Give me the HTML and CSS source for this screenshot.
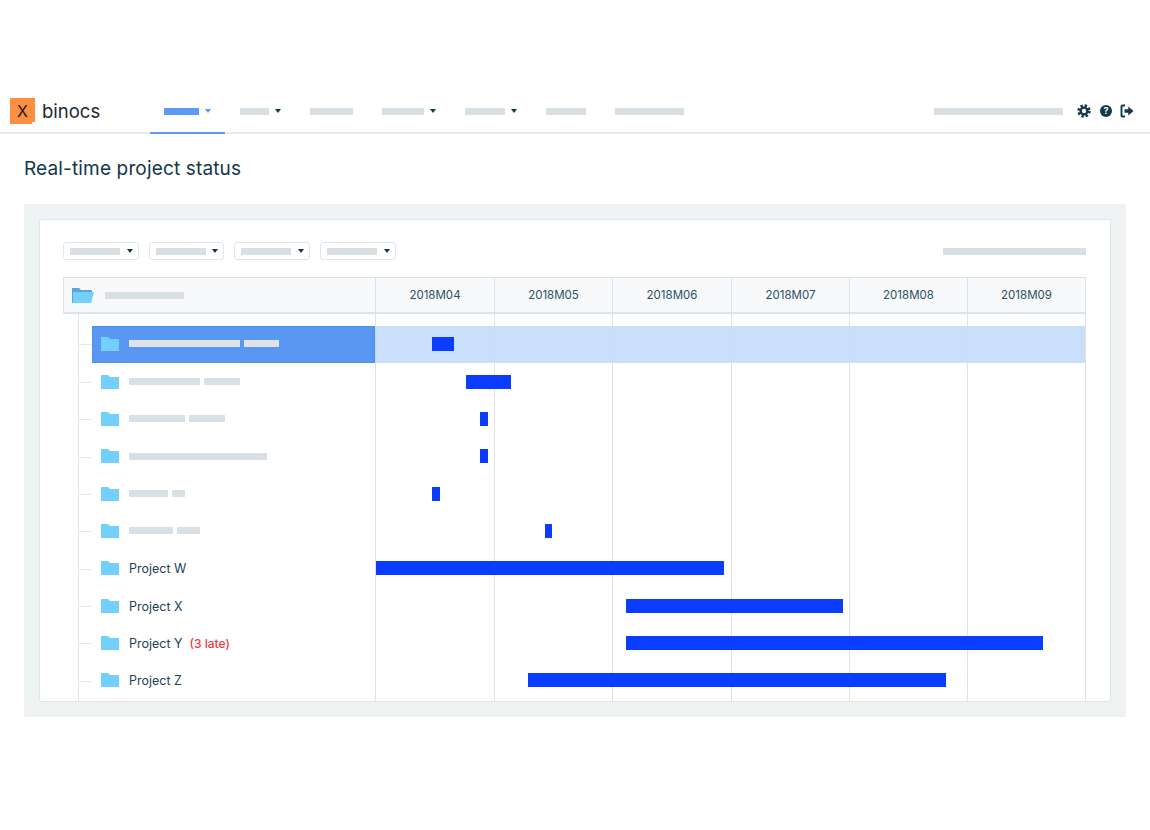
FILE: index.html
```html
<!DOCTYPE html>
<html lang="en">
<head>
    <meta charset="UTF-8">
    <meta name="viewport" content="width=device-width, initial-scale=1.0">
    <title>Real-time project status</title>
    <link rel="stylesheet" href="styles.css">
</head>
<body>
    <svg class="defs" width="0" height="0">
        <symbol id="folder" viewBox="0 0 18 14">
            <path d="M0 0h7l2 2h9v12H0z" fill="#73d0fd"/>
        </symbol>
    </svg>

    <header class="topbar">
        <div class="logo">
            <span class="logo-mark">X</span>
            <span class="logo-name">binocs</span>
        </div>
        <nav class="nav">
            <div class="nav-item active"><span class="stub" style="width:35px"></span><span class="caret"></span></div>
            <div class="nav-item"><span class="stub" style="width:29px"></span><span class="caret"></span></div>
            <div class="nav-item"><span class="stub" style="width:43px"></span></div>
            <div class="nav-item"><span class="stub" style="width:42px"></span><span class="caret"></span></div>
            <div class="nav-item"><span class="stub" style="width:40px"></span><span class="caret"></span></div>
            <div class="nav-item"><span class="stub" style="width:40px"></span></div>
            <div class="nav-item"><span class="stub" style="width:69px"></span></div>
        </nav>
        <div class="tools">
            <span class="stub" style="width:129px"></span>
            <svg class="icon" viewBox="0 0 14 14">
                <circle cx="7" cy="7" r="3.4" fill="none" stroke="#12384a" stroke-width="2.4"/>
                <circle cx="7" cy="7" r="5.4" fill="none" stroke="#12384a" stroke-width="2.6" stroke-dasharray="2.4 1.84"/>
            </svg>
            <svg class="icon" viewBox="0 0 14 14">
                <circle cx="7" cy="7" r="6" fill="#12384a"/>
                <text x="7" y="10.2" text-anchor="middle" class="icon-q">?</text>
            </svg>
            <svg class="icon" viewBox="0 0 14 14">
                <path d="M5 1.500H2.500a1 1 0 0 0-1 1v9a1 1 0 0 0 1 1H5" fill="none" stroke="#12384a" stroke-width="1.9"/>
                <path d="M4.500 5.300h3.800V2.500L13.500 7 8.300 11.500V8.700H4.500z" fill="#12384a"/>
            </svg>
        </div>
    </header>

    <h1 class="page-title">Real-time project status</h1>

    <section class="panel">
        <div class="card">
            <div class="filters">
                <div class="select"><span class="stub"></span><span class="caret"></span></div>
                <div class="select"><span class="stub"></span><span class="caret"></span></div>
                <div class="select"><span class="stub"></span><span class="caret"></span></div>
                <div class="select"><span class="stub"></span><span class="caret"></span></div>
                <span class="stub filters-right"></span>
            </div>

            <div class="gantt">
                <div class="gantt-head">
                    <div class="head-name">
                        <svg class="folder-open" viewBox="0 0 22 15">
                            <path d="M0 0h7l2 2h11v3H0z" fill="#5ba6d6"/>
                            <path d="M0 15V4h22l-3 11z" fill="#73d0fd"/>
                            <path d="M0 0h1v15H0z" fill="#5ba6d6"/>
                        </svg>
                        <span class="stub" style="width:79px"></span>
                    </div>
                    <div class="months">
                        <div>2018M04</div>
                        <div>2018M05</div>
                        <div>2018M06</div>
                        <div>2018M07</div>
                        <div>2018M08</div>
                        <div>2018M09</div>
                    </div>
                </div>

                <div class="gantt-body">
                    <div class="tree">
                        <div class="tree-row selected"><svg class="folder"><use href="#folder"/></svg><span class="stub" style="width:111px"></span><span class="stub" style="width:35px"></span></div>
                        <div class="tree-row"><svg class="folder"><use href="#folder"/></svg><span class="stub" style="width:71px"></span><span class="stub" style="width:36px"></span></div>
                        <div class="tree-row"><svg class="folder"><use href="#folder"/></svg><span class="stub" style="width:56px"></span><span class="stub" style="width:36px"></span></div>
                        <div class="tree-row"><svg class="folder"><use href="#folder"/></svg><span class="stub" style="width:138px"></span></div>
                        <div class="tree-row"><svg class="folder"><use href="#folder"/></svg><span class="stub" style="width:39px"></span><span class="stub" style="width:13px"></span></div>
                        <div class="tree-row"><svg class="folder"><use href="#folder"/></svg><span class="stub" style="width:44px"></span><span class="stub" style="width:23px"></span></div>
                        <div class="tree-row"><svg class="folder"><use href="#folder"/></svg><span class="name">Project W</span></div>
                        <div class="tree-row"><svg class="folder"><use href="#folder"/></svg><span class="name">Project X</span></div>
                        <div class="tree-row"><svg class="folder"><use href="#folder"/></svg><span class="name">Project Y</span><span class="late">(3 late)</span></div>
                        <div class="tree-row"><svg class="folder"><use href="#folder"/></svg><span class="name">Project Z</span></div>
                    </div>

                    <div class="timeline">
                        <div class="grid-lines"><i></i><i></i><i></i><i></i><i></i><i></i></div>
                        <div class="bar-row selected"><span class="bar" style="margin-left:57px;width:22px"></span></div>
                        <div class="bar-row"><span class="bar" style="margin-left:91px;width:45px"></span></div>
                        <div class="bar-row"><span class="bar" style="margin-left:105px;width:8px"></span></div>
                        <div class="bar-row"><span class="bar" style="margin-left:105px;width:8px"></span></div>
                        <div class="bar-row"><span class="bar" style="margin-left:57px;width:8px"></span></div>
                        <div class="bar-row"><span class="bar" style="margin-left:170px;width:7px"></span></div>
                        <div class="bar-row"><span class="bar" style="margin-left:1px;width:348px"></span></div>
                        <div class="bar-row"><span class="bar" style="margin-left:251px;width:217px"></span></div>
                        <div class="bar-row"><span class="bar" style="margin-left:251px;width:417px"></span></div>
                        <div class="bar-row"><span class="bar" style="margin-left:153px;width:418px"></span></div>
                    </div>
                </div>
            </div>
        </div>
    </section>
</body>
</html>
```

FILE: styles.css
```css
/* page */
body {
    margin: 0;
    padding-top: 90px;
    background-color: #fff;
    color: #12384a;
    font-family: "Inter", "Liberation Sans", sans-serif;
}

.defs {
    position: absolute;
}

.stub {
    display: block;
    height: 7px;
    background-color: #d9e0e4;
}

.caret {
    width: 0;
    height: 0;
    border-left: 3px solid transparent;
    border-right: 3px solid transparent;
    border-top: 4px solid #12384a;
}

/* top bar */
.topbar {
    display: flex;
    align-items: stretch;
    height: 42px;
    padding-left: 10px;
    border-bottom: 2px solid #e6ebf0;
}

.logo {
    display: flex;
    align-items: center;
    width: 140px;
}

.logo-mark {
    width: 25px;
    height: 26px;
    margin-right: 7px;
    background-color: #fd8f40;
    clip-path: polygon(0 0, 100% 0, 100% 92%, 88% 92%, 88% 100%, 0 100%);
    color: #1a1a1a;
    font-size: 16px;
    line-height: 26px;
    text-align: center;
}

.logo-name {
    color: #1c2a33;
    font-size: 18.5px;
}

.nav {
    display: flex;
    flex: 1;
}

.nav-item {
    display: flex;
    align-items: center;
    gap: 6px;
    padding: 0 14px;
    margin-right: 1px;
}

.nav-item.active {
    margin-bottom: -2px;
    border-bottom: 2px solid #5b9bf4;
}

.nav-item.active .stub {
    background-color: #5b9bf4;
}

.nav-item.active .caret {
    border-top-color: #5b9bf4;
}

.tools {
    display: flex;
    align-items: center;
    gap: 7.5px;
    padding-right: 16px;
}

.tools .stub {
    margin-right: 6.5px;
}

.icon {
    width: 14px;
    height: 14px;
}

.icon-q {
    fill: #fff;
    font-size: 9px;
    font-weight: 700;
}

.page-title {
    margin: 23px 0 23px 24px;
    font-size: 19px;
    font-weight: 400;
    letter-spacing: 0.15px;
    line-height: 24px;
}

/* panel */
.panel {
    margin: 0 24px;
    padding: 15px;
    background-color: #eff2f3;
}

.card {
    padding: 22px 24px 0 23px;
    background-color: #fff;
    border: 1px solid #dfe5e8;
    border-radius: 2px;
}

.filters {
    display: flex;
    align-items: center;
    gap: 10px;
    margin-bottom: 17px;
}

.select {
    display: flex;
    align-items: center;
    justify-content: space-between;
    box-sizing: border-box;
    width: 75.7px;
    height: 18px;
    padding: 0 5px 0 6px;
    border: 1px solid #e2e7ea;
    border-radius: 3px;
}

.select .stub {
    width: 50px;
}

.filters-right {
    width: 143px;
    margin-left: auto;
}

/* gantt */
.gantt-head {
    display: flex;
    height: 34px;
    border: 1px solid #dde3e7;
    border-bottom-width: 2px;
    background-color: #f8f9fa;
}

.head-name {
    display: flex;
    align-items: center;
    gap: 11px;
    width: 311px;
    padding-left: 8px;
    box-sizing: border-box;
}

.folder-open {
    width: 22px;
    height: 15px;
}

.months,
.grid-lines {
    display: grid;
    grid-template-columns: 119px 118px 119px 118px 118px 1fr;
}

.months {
    flex: 1;
}

.months div {
    border-left: 1px solid #dde3e7;
    color: #2a5063;
    font-size: 11.5px;
    line-height: 35px;
    text-align: center;
}

.gantt-body {
    display: flex;
    margin-left: 1px;
    border-right: 1px solid #dde3e7;
}

.tree {
    width: 311px;
    padding: 12px 0 2px;
    box-sizing: border-box;
    background: linear-gradient(#dde3e7, #dde3e7) 14px 0 / 1px 100% no-repeat;
}

.tree-row {
    position: relative;
    display: flex;
    align-items: center;
    gap: 4px;
    box-sizing: border-box;
    height: 37.35px;
    margin-left: 28px;
    padding-left: 9px;
}

/* branch off the tree line */
.tree-row::before {
    content: "";
    position: absolute;
    left: -13px;
    top: 50%;
    width: 13px;
    height: 1px;
    background-color: #e4e9ec;
}

.tree-row .stub {
    margin-bottom: 1px;
}

.tree-row.selected,
.bar-row.selected {
    height: 36.5px;
    margin-bottom: 0.85px;
}

.tree-row.selected {
    background-color: #5898f3;
    outline: 1px solid #4a8ff5;
    outline-offset: -1px;
}

.tree-row.selected .stub {
    background-color: #e0e2e4;
}

.folder {
    width: 18px;
    height: 14px;
    margin: 0 6px 1px 0;
    flex: none;
}

.name {
    color: #1d4456;
    font-size: 12.5px;
}

.late {
    margin-left: 3px;
    color: #f8373c;
    font-size: 12px;
    font-weight: 500;
}

.timeline {
    position: relative;
    flex: 1;
    padding-top: 12px;
}

.grid-lines {
    position: absolute;
    inset: 0;
}

.grid-lines i {
    border-left: 1px solid #dde3e7;
}

.bar-row {
    position: relative;
    display: flex;
    align-items: center;
    box-sizing: border-box;
    height: 37.35px;
    padding-bottom: 1px;
}

.bar-row.selected {
    background-color: rgba(196, 219, 250, 0.9);
}

.bar {
    height: 14px;
    background-color: #0a3dff;
}
```
